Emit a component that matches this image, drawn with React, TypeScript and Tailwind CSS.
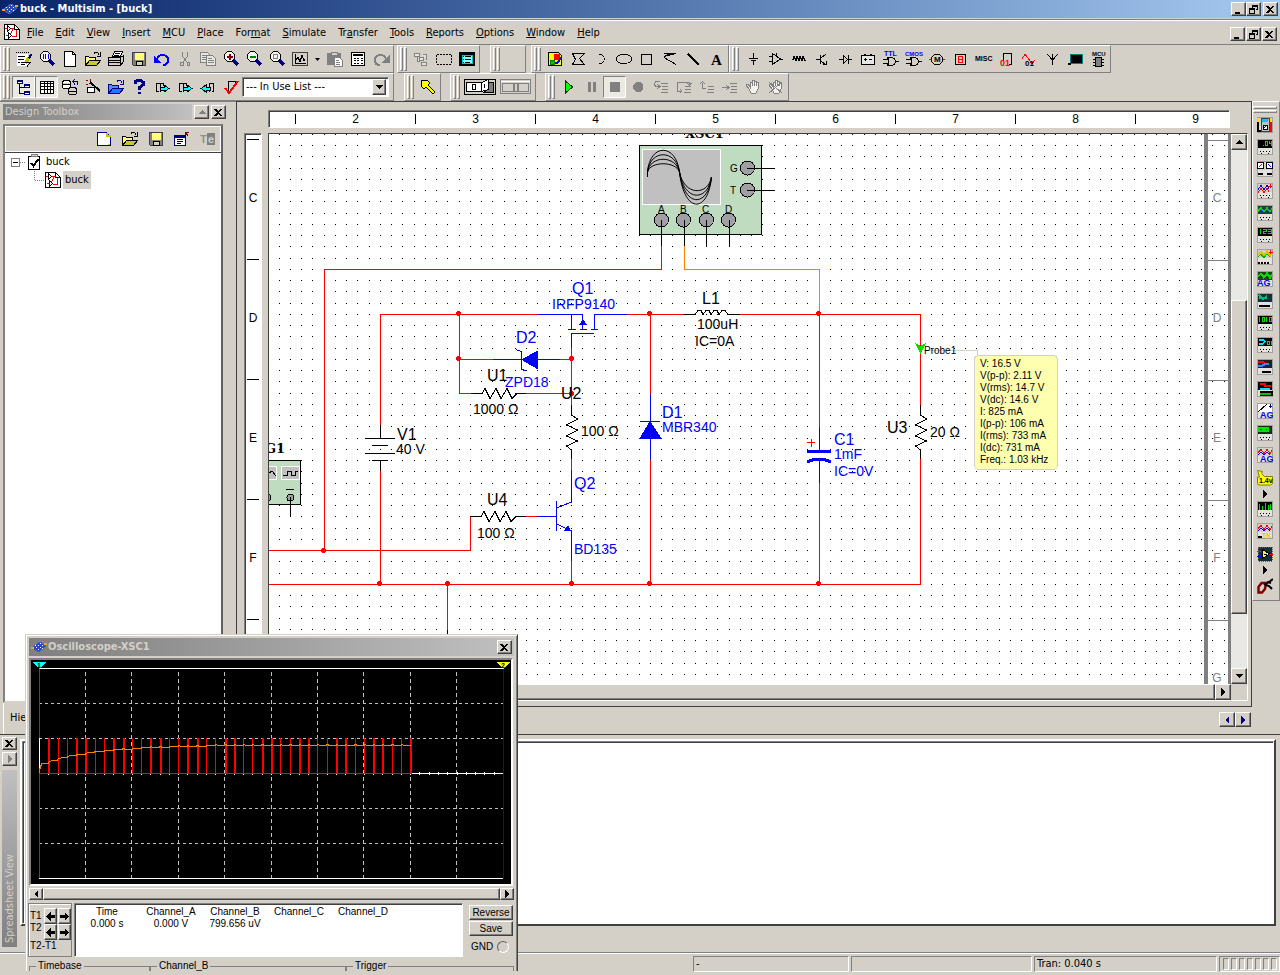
import { ReactNode, useState } from 'react';

const RAISED =
  'border border-t-white border-l-white border-r-[#404040] border-b-[#404040] shadow-[inset_-1px_-1px_0_#808080]';
const SUNKEN = 'border border-t-[#808080] border-l-[#808080] border-r-white border-b-white';
const WELL =
  'border border-t-[#808080] border-l-[#808080] border-r-white border-b-white shadow-[inset_1px_1px_0_#404040]';

// d, stroke, fill, stroke width
type Shape = [string, string?, string?, number?];
type Label = [text: string, x: number, y: number, color: string, size: number];
interface Glyph {
  s: Shape[];
  t?: Label[];
}

const G = '#808080';
const BLUE = '#0000ff';
const NAVY = '#000080';
const LENS: Shape = ['M4.5 .5h4l3 3v4l-3 3h-4l-3-3v-4z', '#000', '#f4f4f4'];
const HANDLE: Shape = ['M10.500 9.500l4.500 4.500', NAVY, 'none', 3];
const FOLDER: Shape[] = [
  ['M.5 14.500v-9h3l1 1h6v3', '#000', '#ffff80'],
  ['M.5 14.500l4-5h11l-4 5z', '#000', '#c8c832'],
  ['M9 2.500c1-2 4-2 5 1M15.500 1v4h-4', '#000'],
];
const FLOPPY: Shape[] = [
  ['M1.5 1.500h13v13h-12l-1-1z', '#404040', G],
  ['M4 2h8v6h-8z', '#ffff80', '#ffff80'],
  ['M5 10.500h6v4h-6z', '#000', '#d4d0c8'],
];
const SCHEMATIC: Shape[] = [
  ['M.500 .5h10l5 5v10h-15z', '#000', '#fff'],
  ['M10.500 .5v5h5', '#000'],
  ['M1 4.500h4M2 11.500h4l3-7h-3M12 6v6h-4', '#ff0000'],
  ['M3.500 2v5l3-2.500zM4.500 9v5l3-2.500z', '#000', '#fff'],
];
const LINES: Shape = ['M8 4.500h7M9 7.500h6M9 10.500h6M8 13.500h7', G];

const glyphs: Record<string, Glyph> = {
  app: {
    s: [
      ['M1 9l8-6 6 4-7 6z', '#3a62c8', '#2a4ab0'],
      ['M5 8h1M7 6h1M9 4.500h1M7 10h1M9 8h1M11 6h1M4 6h1M11 9h1', '#fff', 'none', 1],
      ['M0 9h3M13 5h3', '#f0a030', 'none', 2],
    ],
  },
  schematic: { s: SCHEMATIC },
  notes: {
    s: [
      ['M1.500 3.500h10v11h-10z', '#fff', '#fff'],
      ['M0 1.500h1M2 1.500h1M4 1.500h1M6 1.500h1M8 1.500h1M10 1.500h1M12 1.500h1M2 5.500h7M2 8.500h6M2 11.500h2', '#000'],
      ['M15.500 3l-3 5', NAVY, 'none', 2],
      ['M12.500 7l-3 5', '#c0c000', 'none', 3],
      ['M5 11.500h9l-3 4M5 13.500h4', '#000'],
    ],
  },
  find: { s: [LENS, ['M4 3v5M6.500 3v5M9 3v5', BLUE], HANDLE] },
  page: { s: [['M2.500 .500h8l3 3v12h-11z', '#000', '#fff'], ['M10.500 .500v3h3', '#000']] },
  pageNew: { s: [['M1.500 1.500h9l4 4v9h-13z', NAVY, '#fff'], ['M10.500 2v3h4M13 13v1', '#c8c800', 'none', 2]] },
  open: { s: FOLDER },
  print: {
    s: [
      ['M4.500 5.500l2-5h8l-2 5z', '#000', '#fff'],
      ['M.500 6.500h12l3-2v6l-3 4h-12z', '#000', '#d4d0c8'],
      ['M1 9.500h12M1 11.500h12M12.500 7v7M7 2.500h5M6 4.500h5', '#000'],
      ['M9 12.500h2', '#c8c800'],
    ],
  },
  save: { s: FLOPPY },
  undo: { s: [['M3 8c2-6 11-5 11 1c0 3-2 5-5 5', BLUE, 'none', 2], ['M0 5v6h6z', BLUE, BLUE]] },
  cut: { s: [['M5.500 1v4l4 6M10.500 1v4l-4 6M4 11h2v3h-3v-2zM10 11h2v3h-2z', G, 'none', 1]] },
  copy: {
    s: [
      ['M.500 1.500h7l2 2v8h-9z', G, '#e8e6e0'],
      ['M6.500 4.500h6l3 3v7h-9z', G, '#e8e6e0'],
      ['M8 7.500h4M8 9.500h6M8 11.500h6M2 4.500h4M2 6.500h4M2 8.500h4', G],
    ],
  },
  zoomIn: { s: [LENS, ['M3.500 5.500h6M6.500 2.500v6', '#800000', 'none', 2], HANDLE] },
  zoomOut: { s: [LENS, ['M3.500 5.500h6', '#008000', 'none', 2], HANDLE] },
  zoomFit: { s: [LENS, ['M4.500 3.500h4v4h-4z', G], HANDLE] },
  graph: { s: [['M.5 1.500h15v13h-15z', '#404040', '#d4d0c8'], ['M3.500 3v9h10', '#000'], ['M4 9l2-3 2 5 2-7 2 6 1-2', '#000']] },
  paste: { s: [['M.500 2.500h13v11h-13z', G, G], ['M4 1h6v3h-6z', G, '#d4d0c8'], ['M7.500 6.500h5l3 3v6h-8z', G, '#fff'], ['M9 9.500h3M9 11.500h4M9 13.500h4', G]] },
  calc: {
    s: [
      ['M1.500 1.500h13v13h-13z', '#000', '#fff'],
      ['M3 4h10', '#000', 'none', 2],
      ['M3.500 7.500h2M7 7.500h2M10.500 7.500h2M3.500 9.500h2M7 9.500h2M10.500 9.500h2M3.500 12h2M7 12h2M10.500 12h2', '#000', 'none', 1],
    ],
  },
  redo: { s: [['M13 8c-2-6-11-5-11 1c0 3 2 5 5 5', G, 'none', 2], ['M16 5v6h-6z', G, G]] },
  hier: { s: [['M1.500 2.500h5v3h-5zM6.500 6.500h4v3h-4zM8.500 11.500h5v3h-5zM9.500 3.500h4v5M4.500 6v4h2', G, '#e8e6e0']] },
  area: { s: [['M1 3.500h2M4 3.500h2M7 3.500h2M10 3.500h2M13 3.500h2M1 13.500h2M4 13.500h2M7 13.500h2M10 13.500h2M13 13.500h2M.500 4v2M.500 7v2M.500 10v2M15.500 4v2M15.500 7v2M15.500 10v2', '#000']] },
  panel: { s: [['M.500 1.500h15v13h-15z', '#000', '#000'], ['M3 4h10v8h-10z', '#00c8c8', '#80ffff'], ['M4 5.500h1M6 5.500h6M4 8.500h1M6 8.500h6M4 11.500h1M6 11.500h5', '#000']] },
  picture: {
    s: [
      ['M1.500 1.500h10l3 3v10h-13z', '#000', '#ffff00'],
      ['M7 3h5v5h-5z', '#ff0000', '#ff0000'],
      ['M3 9h4v4h-4z', '#008000', '#00c000'],
      ['M14.500 6l-4 6h-3', BLUE, 'none', 2],
    ],
  },
  polygon: { s: [['M2.500 2.500h12l-5 5 5 6h-12l3-5z', '#000']] },
  arc: { s: [['M6 3c7 0 7 10 0 10', '#000']] },
  ellipse: { s: [['M.500 8c0-6 15-6 15 0s-15 6-15 0z', '#000']] },
  rect: { s: [['M2.500 3.500h10v10h-10z', '#000']] },
  polyline: { s: [['M14 2.500h-5l-7 3v1l12 7M2 2.500h8M2 5.500l12-3', '#000']] },
  line: { s: [['M3 3l11 11', '#000', 'none', 2]] },
  letter: { s: [], t: [['A', 3, 14, '#000', 15]] },
  source: { s: [['M8.500 2v5M4 7.500h9M6 9.500h5M8.500 10v4', '#000']] },
  opamp: { s: [['M4.500 2.500v11l8-5.500zM1 5.500h3M1 10.500h3M12 8h3M8.500 2v3', '#000']] },
  coil: { s: [['M1 8.500h1l1-3 2 4 1-4 2 4 1-4 2 4 1-4 2 4h1', '#000']] },
  npn: { s: [['M2 8.500h4M6.500 4v9M7 7l5-4M7 10l5 4M9 13h3v-3', '#000']] },
  diode: { s: [['M2 8.500h4M11 8.500h4M6.500 4.500v8l4-4zM11.500 4v9', '#000']] },
  battery: { s: [['M1.500 4.500h13v9h-13z', '#000', '#e8e6e0'], ['M4 3h2M10 3h2M4 8.500h3M9 8.500h3M5.500 7v3', '#000']] },
  ttl: { s: [['M4.500 6.500h4c5 1 5 7 0 8h-4c2-3 2-5 0-8zM0 8.500h5M0 12.500h5M12 10.500h4', '#000']], t: [['TTL', 1, 5, BLUE, 7]] },
  cmos: { s: [['M4.500 6.500h4c5 1 5 7 0 8h-4c2-3 2-5 0-8zM0 8.500h5M0 12.500h5M12 10.500h4', '#000']], t: [['CMOS', -1, 5, BLUE, 6]] },
  motor: { s: [['M0 8.500h3M13 8.500h3', '#ff0000'], ['M5.500 3.500h5l3 3v4l-3 3h-5l-3-3v-4z', '#000']], t: [['M', 5, 11, '#000', 8]] },
  segment: { s: [['M3.500 3.500h10v10h-10z', '#000'], ['M6 5.500h5M6 8.500h5M6 11.500h5M6.500 6v5M10.500 6v5', '#ff0000']] },
  misc: { s: [], t: [['MISC', 0, 10, '#000', 7]] },
  digital: { s: [['M5.500 10v-8h8v11h-3', '#000']], t: [['01', 2, 15, '#ff0000', 9]] },
  mixed: { s: [['M1 8l3-5 3 4 4 6 3-4', '#ff0000']], t: [['01', 4, 15, '#000', 8]] },
  antenna: { s: [['M8.500 3v11M3 3l5.500 6 5.500-6', '#000']] },
  screen: { s: [['M3.500 3.500h12v9h-12z', '#008080', '#000'], ['M1 12.500h3M5 5.500h1', '#000', 'none', 2]] },
  mcu: { s: [['M5.500 6.500h6v9h-6z', '#000', G], ['M3 8.500h2M3 11.500h2M3 14h2M12 8.500h2M12 11.500h2M12 14h2', '#000']], t: [['MCU', 2, 5, '#000', 6]] },
  tree: { s: [['M1.500 1.500h5v3h-5zM8.500 5.500h5v3h-5zM8.500 12.500h5v3h-5z', NAVY, '#fff'], ['M1 2.500h6M8 6.500h6M8 13.500h6', NAVY], ['M3.500 5v9.500h5M3.500 8.500h5', '#000']] },
  table: { s: [['M1.500 2.500h13v12h-13z', '#000', '#fff'], ['M2 4.500h12M2 7.500h12M2 10.500h12M5.500 3v11M8.500 3v11M11.500 3v11', '#000']] },
  database: { s: [['M.500 3.500c0-3 8-3 8 0v4c0 3-8 3-8 0zM.500 3.500c0 3 8 3 8 0', '#000', '#fff'], ['M6.500 10.500c0-3 8-3 8 0v3c0 3-8 3-8 0zM6.500 10.500c0 3 8 3 8 0', '#000', '#d4d0c8'], ['M11 2.500h4.500v3M13 0l-2 2.500 2 3', NAVY]] },
  wizard: { s: [['M1 1h2M5 0v2M1 5h2M4 4h1', '#800000'], ['M5 3l10 9', '#000', 'none', 2], ['M2.500 8.500h7v5h-7z', '#000', '#fff']] },
  openBlue: { s: [['M.500 14.500v-9h3l1 1h6v3', NAVY, '#4a90ff'], ['M.500 14.500l4-5h11l-4 5z', NAVY, '#1e78ff'], ['M9 2.500c1-2 4-2 5 1M15.500 1v4h-4', NAVY]] },
  help: { s: [['M4 5v-2l2-1.500h4l2 1.500v3l-4 3v2M8 13v2', NAVY, 'none', 3]] },
  fwd: { s: [['M4.500 12.500h-2v-8h4v8M6.500 4.500h3v2', '#000'], ['M6 8.500h4v-2.500l5 3.500-5 3.500v-2h-4z', '#000', '#00ffff']] },
  back: { s: [['M11.500 12.500h2v-8h-4v8', '#000'], ['M10 8.500h-4v-2.500l-5 3.500 5 3.500v-2h4z', '#000', '#00ffff']] },
  erc: { s: [['M5.500 12v-9.500h7v4', '#000'], ['M2 9l4 5 9-12', '#ff0000', 'none', 2]] },
  probe: { s: [['M1 1h6l3 3-2 2 7 7-2 2-7-7-2 2-3-3z', '#000', '#ffff00']] },
  run: { s: [['M4.500 2v12l7-6z', '#004000', '#00ff00']] },
  pause: { s: [['M4 3h3v10h-3zM9 3h3v10h-3z', 'none', G]] },
  stop: { s: [['M3 3h10v10h-10z', 'none', G]] },
  record: { s: [['M6 3h4l3 3v4l-3 3h-4l-3-3v-4z', 'none', G]] },
  into: { s: [LINES, ['M7 2.500h-4c-2 2-2 4 0 5h3M4 5l3 2.500-3 2.500', G]] },
  over: { s: [['M9 7.500h6M9 10.500h6M8 13.500h7', G], ['M1.500 12v-9h12v3M11 4l2.500 2.500 2-2.500M1 12h5M4 10l2 2-2 2', G]] },
  out: { s: [['M9 7.500h6M9 10.500h6M8 13.500h7', G], ['M7 9.500h-4v-6M1 5l2.500-2.500 2.500 2.500', G]] },
  cursor: { s: [LINES, ['M0 8.500h6M4 6l3 2.500-3 2.500', G]] },
  hand: { s: [['M4 10l-3-4 2-1 2 3v-5h2v4-6h2v6-5h2v5-4h2v7l-2 4h-5z', G, '#f4f2ec']] },
  handStop: { s: [['M4 10l-3-4 2-1 2 3v-5h2v4-6h2v6-5h2v5-4h2v7l-2 4h-5z', G, '#f4f2ec'], ['M1 3l13 11M14 3l-13 11', G, 'none', 1]] },
  report: { s: [['M.500 4.500h11v10h-11z', NAVY, '#fff'], ['M1 5.500h10', NAVY, 'none', 2], ['M3 8.500h6M3 10.500h6M3 12.500h4', '#000'], ['M15 1h-4v3M14 5l-3-4', '#800000']] },
  text: { s: [['M7 2h8v12h-8z', 'none', G]], t: [['T', 0, 12, '#909090', 11], ['e', 8, 12, '#d4d0c8', 11]] },
  clip: { s: [['M2.500 2.500h11v13h-11z', '#000', '#fff'], ['M5 2.500h6v-2h-6z', G, '#d4d0c8'], ['M5 9l2.500 3 5-7', '#000', 'none', 2]] },
};

function Icon({ name }: { name: string }) {
  const g = glyphs[name];
  return (
    <svg width="16" height="16" viewBox="0 0 16 16" className="shrink-0 overflow-visible" shapeRendering="crispEdges" aria-hidden="true">
      {g.s.map(([d, stroke = '#000', fill = 'none', w = 1], i) => (
        <path key={i} d={d} stroke={stroke} fill={fill} strokeWidth={w} />
      ))}
      {g.t?.map(([text, x, y, color, size]) => (
        <text key={text} x={x} y={y} fill={color} fontSize={size} fontWeight="bold" fontFamily={name === 'letter' ? 'Liberation Serif' : 'Liberation Sans'}>
          {text}
        </text>
      ))}
    </svg>
  );
}

function Tool({ name, pressed }: { name: string; pressed?: boolean }) {
  return (
    <button
      aria-label={name}
      className={`flex h-[22px] w-[23px] shrink-0 items-center justify-center ${pressed ? `${SUNKEN} bg-[#ebe9e4]` : ''}`}
    >
      <Icon name={name} />
    </button>
  );
}

function Band({ children, className = '' }: { children?: ReactNode; className?: string }) {
  return (
    <div
      className={`flex h-7 shrink-0 items-center border border-t-white border-l-white border-r-[#808080] border-b-[#808080] ${className}`}
    >
      <div className="mx-0.5 flex gap-px">
        <div className="h-6 w-[3px] border border-t-white border-l-white border-r-[#808080] border-b-[#808080]" />
        <div className="h-6 w-[3px] border border-t-white border-l-white border-r-[#808080] border-b-[#808080]" />
      </div>
      {children}
    </div>
  );
}

function Arrow({ dir, color = '#000' }: { dir: 'up' | 'down' | 'left' | 'right'; color?: string }) {
  const d = { up: 'M0 6h8l-4-4z', down: 'M0 2h8l-4 4z', left: 'M6 0v8l-4-4z', right: 'M2 0v8l4-4z' }[dir];
  return (
    <svg width="8" height="8" viewBox="0 0 8 8" shapeRendering="crispEdges" aria-hidden="true">
      <path d={d} fill={color} />
    </svg>
  );
}

const captionPaths = {
  minimize: 'M2 8h5v2h-5z',
  restore: 'M4 1h6v5h-2v-1h1v-2h-4v1h-1zM1 4h6v6h-6zM2 6v3h4v-3z',
  close: 'M1 2h2l2 2 2-2h2l-3 3.500 3 3.500h-2l-2-2-2 2h-2l3-3.500z',
};

function CaptionButton({ kind }: { kind: keyof typeof captionPaths }) {
  return (
    <button aria-label={kind} className={`flex h-3.5 w-[15px] items-center justify-center bg-[#d4d0c8] ${RAISED}`}>
      <svg width="11" height="11" viewBox="0 0 11 11" shapeRendering="crispEdges" aria-hidden="true">
        <path d={captionPaths[kind]} fillRule="evenodd" />
      </svg>
    </button>
  );
}

const menus: [string, string, string][] = [
  ['', 'F', 'ile'],
  ['', 'E', 'dit'],
  ['', 'V', 'iew'],
  ['', 'I', 'nsert'],
  ['', 'M', 'CU'],
  ['', 'P', 'lace'],
  ['For', 'm', 'at'],
  ['', 'S', 'imulate'],
  ['Tr', 'a', 'nsfer'],
  ['', 'T', 'ools'],
  ['', 'R', 'eports'],
  ['', 'O', 'ptions'],
  ['', 'W', 'indow'],
  ['', 'H', 'elp'],
];

function DesignToolbox() {
  return (
    <aside className="flex w-[236px] shrink-0 flex-col border-t border-[#808080] pt-0.5">
      <div className="flex h-4 items-center gap-0.5 pl-[3px]">
        <h2 className="h-full w-[189px] bg-linear-to-r from-[#808080] to-[#c0c0c0] pl-0.5 leading-4 text-[#d4d0c8]">
          Design Toolbox
        </h2>
        <button aria-label="Roll up" className={`flex h-3.5 w-[15px] items-center justify-center ${RAISED}`}>
          <Arrow dir="up" color="#808080" />
        </button>
        <CaptionButton kind="close" />
      </div>
      <div className="mt-1 ml-[3px] flex w-[220px] grow flex-col border-2 border-t-[#808080] border-l-[#808080] border-r-[#606060] border-b-[#d4d0c8]">
        <div className="flex h-[26px] shrink-0 items-center justify-end gap-0.5 border border-white">
          {['pageNew', 'open', 'save', 'report', 'text'].map((n) => (
            <span key={n} className="flex w-6 justify-center">
              <Tool name={n} />
            </span>
          ))}
        </div>
        <ul className="grow border-t border-[#404040] bg-white pl-1">
          <li>
            <div className="flex h-[18px] items-center">
              <svg width="17" height="18" shapeRendering="crispEdges" aria-hidden="true">
                <path d="M2.500 5.500h8v8h-8z" stroke="#808080" fill="none" />
                <path d="M11 9.500h6" stroke="#808080" strokeDasharray="1 1" />
                <path d="M4 9.500h5" stroke="#000" />
              </svg>
              <Icon name="clip" />
              <span className="px-1">buck</span>
            </div>
            <ul>
              <li className="flex h-[18px] items-center pl-5">
                <svg width="16" height="18" shapeRendering="crispEdges" aria-hidden="true">
                  <path d="M5.500 0v9.500h10" stroke="#808080" fill="none" strokeDasharray="1 1" />
                </svg>
                <Icon name="schematic" />
                <span className="ml-0.5 bg-[#d4d0c8] px-0.5 leading-[18px]">buck</span>
              </li>
            </ul>
          </li>
        </ul>
      </div>
      <div className="ml-[3px] h-[31px] border-l border-white pt-2 pl-1.5">Hierarchy</div>
    </aside>
  );
}

const SHEET_TOP = 134;
const dots = (() => {
  let d = '';
  for (let j = -1; j < 60; j++) {
    const y = Math.floor(145.5 + 11.25 * j);
    for (let i = 0; i < 85; i++) d += `M${Math.floor(279 + 11.25 * i)} ${y}h1v1h-1z`;
  }
  return d;
})();

const redWires =
  'M661.500 246V269.500H324.500V550M269 550.500H470.500V516M380.500 425V314.500H538M380.500 471V584M269 584.500H920.500V459M920.500 405V314.500H740M627 314.500H684' +
  'M459.500 314V393.500H471M459 359.500H493M560 359.500H571M526 393.500H571M571.500 348V405M571.500 459V470M571.500 561V584M526 516.500H537' +
  'M650.500 314V394M650.500 460V584M819.500 314V427M819.500 483V584M447.500 584V630';
const blackParts =
  'M470 516.500H481l3 -5 5 10 6 -10 5 10 6 -10 5 10 5 -5H526M471 393.500H482l3 -5 5 10 6 -10 5 10 6 -10 5 10 5 -5H526' +
  'M571.500 405V415l6 4 -11 6 11 5 -11 6 11 5 -11 5 5 4V459M920.500 405V415l6 4 -11 6 11 5 -11 6 11 5 -11 5 5 4V459' +
  'M380.500 425V438M365 438.500H395M372 445.500H388M365 453.500H395M372 460.500H388M380.500 460V471M447.500 630V700' +
  'M684 314.500H695l3-4h3l2 4l3-4h3l2 4l3-4h3l2 4l3-4h3l3 4H740';
const blueParts =
  'M538 314.500H582.500V329M571.500 314V329M594.500 329V314.500H627M568 329.500H576M580 329.500H587M591 329.500H598M594 333.500H571.500V348' +
  'M493 359.500H560M516 349.500l5 2V369l5 2M650.500 394V460M640 421.500H660M819.500 427V451M819.500 460V483' +
  'M537 516.500H556M556.500 501V531M571.500 470V502L556.500 508M556.500 524L571.500 531V561';
const junctions = [
  [323, 550], [379, 583], [447, 583], [571, 583], [649, 583], [818, 583],
  [458, 313], [649, 313], [818, 313], [458, 358], [571, 358], [571, 393],
];

// text, x, baseline, size
const blackLabels: [string, number, number, number][] = [
  ['L1', 702, 304, 16], ['100uH', 697, 329, 14], ['IC=0A', 695, 346, 14], ['U1', 487, 381, 16], ['1000 Ω', 473, 414, 14],
  ['U2', 561, 399, 16], ['100 Ω', 581, 436, 14], ['V1', 397, 440, 16], ['40 V', 396, 454, 14], ['U4', 487, 505, 16],
  ['100 Ω', 477, 538, 14], ['U3', 887, 433, 16], ['20 Ω', 930, 437, 14],
];
const blueLabels: [string, number, number, number][] = [
  ['Q1', 572, 294, 16], ['IRFP9140', 552, 309, 14], ['D2', 516, 343, 16], ['ZPD18', 505, 387, 14], ['Q2', 574, 489, 16],
  ['BD135', 574, 554, 14], ['D1', 662, 418, 16], ['MBR340', 662, 432, 14], ['C1', 834, 445, 16], ['1mF', 834, 459, 14],
  ['IC=0V', 834, 476, 14],
];
const readings = [
  'V: 16.5 V', 'V(p-p): 2.11 V', 'V(rms): 14.7 V', 'V(dc): 14.6 V', 'I: 825 mA', 'I(p-p): 106 mA', 'I(rms): 733 mA',
  'I(dc): 731 mA', 'Freq.: 1.03 kHz',
];

function Schematic() {
  return (
    <svg className="block h-full w-full" fontFamily="Liberation Sans" fill="none" role="img" aria-label="Buck converter schematic">
      <g transform={`translate(-269 -${SHEET_TOP})`} shapeRendering="crispEdges">
        <path d="M1204 134h4v800h-4zM1228 134h3v800h-3z" fill="#808080" />
        <path d="M1208 140.500h20M1208 260.500h20M1208 380.500h20M1208 500.500h20M1208 620.500h20" stroke="#808080" />
        {['C', 'D', 'E', 'F', 'G'].map((c, i) => (
          <text key={c} x="1217" y={202 + i * 120} textAnchor="middle" fontSize="12" fill="#808080">
            {c}
          </text>
        ))}
        <path d={dots} fill="#000" />
        <path d={redWires} stroke="#f00" />
        <path d="M684.500 246V269.500H819.500V314" stroke="#ff8000" />
        <path d={blackParts} stroke="#000" />
        <path d={blueParts} stroke="#00f" />
        <path d="M579 325h8l-4-6zM521 359.500l17-9v19zM650 421l12 18h-23zM571 531l-7 0 4-6z" fill="#00f" />
        <path d="M807 451.500h24M807 462q12-6 24 0" stroke="#00f" strokeWidth="3" />
        <path d="M807 442.500h8M811.500 439v8" stroke="#f00" />
        <path d="M924 350.500H977.500V356" stroke="#d4d0c8" />
        {junctions.map(([x, y]) => (
          <circle key={`${x}-${y}`} cx={x + 0.5} cy={y + 0.5} r="2.500" fill="#f00" />
        ))}
        {blackLabels.map(([t, x, y, size]) => (
          <text key={`${t}-${x}`} x={x} y={y} fontSize={size} fill="#000">
            {t}
          </text>
        ))}
        {blueLabels.map(([t, x, y, size]) => (
          <text key={`${t}-${x}`} x={x} y={y} fontSize={size} fill="#00f">
            {t}
          </text>
        ))}
        <path d="M915 343l5.500 3 5.500-3-5.500 11z" fill="#00e000" />
        <text x="924" y="354" fontSize="10" fill="#000">Probe1</text>
        <rect x="974.500" y="355.500" width="83" height="114" rx="4" fill="#ffffb0" stroke="#d4d0c8" />
        {readings.map((r, i) => (
          <text key={r} x="980" y={367 + i * 12} fontSize="10" fill="#000">
            {r}
          </text>
        ))}

        {/* oscilloscope XSC1 */}
        <text x="685" y="138" fontSize="13" fontWeight="bold" fontFamily="DejaVu Serif" fill="#000">XSC1</text>
        <rect x="639.500" y="145.500" width="122" height="89" fill="#c0dcc0" stroke="#000" />
        <rect x="642.500" y="149.500" width="78" height="55" fill="#c0c0c0" stroke="#fff" />
        {[0, 1, 2, 3].map((k) => (
          <path
            key={k}
            d={`M647.500 177V172C650 ${143 + k * 6} 676 ${143 + k * 6} 679.500 172C684 ${214 - k * 6} 708 ${214 - k * 6} 711.500 177`}
            stroke="#000"
            shapeRendering="auto"
          />
        ))}
        {[[747, 168], [747, 190], [661, 220], [683, 220], [706, 220], [728, 220]].map(([x, y]) => (
          <circle key={`${x}-${y}`} cx={x + 0.5} cy={y} r="7" fill="#a0a0a4" stroke="#000" />
        ))}
        <path d="M747 168.500h28M747 190.500h28M661.500 220v26M684.500 220v26M706.500 220v26M729.500 220v26" stroke="#000" />
        {([['G', 730, 172], ['T', 730, 194], ['A', 658, 213], ['B', 680, 213], ['C', 702, 213], ['D', 725, 213]] as const).map(([t, x, y]) => (
          <text key={t} x={x} y={y} fontSize="10" fill="#000">
            {t}
          </text>
        ))}

        {/* function generator, cut off by the sheet edge */}
        <text x="265" y="453" fontSize="13" fontWeight="bold" fontFamily="DejaVu Serif" fill="#000">G1</text>
        <path d="M260 460.500H300.500V504.500H260z" fill="#c0dcc0" stroke="#000" />
        <path d="M260 466.500H276.500V479.500H260zM281.500 466.500h18v13h-18z" fill="#c0c0c0" stroke="#fff" />
        <path d="M269 473l3-2 4 5M283 475.500h4v-4h4v4h4v-4h3M286 489.500h8" stroke="#000" />
        <circle cx="267.500" cy="497.500" r="3.500" fill="#a0a0a4" stroke="#000" />
        <circle cx="290.500" cy="497.500" r="3.500" fill="#a0a0a4" stroke="#000" />
        <path d="M290.500 497v20" stroke="#000" />
      </g>
    </svg>
  );
}

function Workspace() {
  return (
    <main className="flex min-w-0 grow flex-col">
      <div className="flex min-h-0 grow flex-col border border-[#404040] pt-2 pr-[3px] pb-[5px] pl-[7px]">
        <div className={`mr-[18px] ml-6 flex h-[18px] shrink-0 overflow-hidden bg-white ${WELL}`}>
          <div className="w-[26px] shrink-0" />
          {[2, 3, 4, 5, 6, 7, 8, 9].map((n) => (
            <div key={n} className="my-[3px] w-[120px] shrink-0 border-l border-black text-center text-[12px] leading-[11px] [font-family:'Liberation_Sans']">
              {n}
            </div>
          ))}
        </div>
        <div className="mt-[5px] flex min-h-0 grow">
          <div className={`mr-1.5 flex w-[18px] shrink-0 flex-col overflow-hidden bg-white ${WELL}`}>
            <div className="h-[5px] shrink-0" />
            {['C', 'D', 'E', 'F', 'G'].map((c) => (
              <div key={c} className="mx-0.5 h-[120px] shrink-0 border-t border-black text-center text-[12px] leading-[116px] [font-family:'Liberation_Sans']">
                {c}
              </div>
            ))}
          </div>
          <div className="flex min-w-0 grow flex-col border border-t-[#404040] border-l-[#404040] border-r-white border-b-white">
            <div className="flex min-h-0 grow">
              <div className="min-w-0 grow overflow-hidden bg-white">
                <Schematic />
              </div>
              <div className="flex w-4 shrink-0 flex-col bg-[#eae8e4]">
                <button aria-label="Scroll up" className={`flex h-4 items-center justify-center bg-[#d4d0c8] ${RAISED}`}>
                  <Arrow dir="up" />
                </button>
                <div className="h-[150px]" />
                <div className={`h-[314px] bg-[#d4d0c8] ${RAISED}`} />
                <div className="grow" />
                <button aria-label="Scroll down" className={`flex h-4 items-center justify-center bg-[#d4d0c8] ${RAISED}`}>
                  <Arrow dir="down" />
                </button>
              </div>
            </div>
            <div className="mr-4 flex h-4 shrink-0">
              <div className={`grow ${RAISED}`} />
              <button aria-label="Scroll right" className={`flex w-4 items-center justify-center ${RAISED}`}>
                <Arrow dir="right" />
              </button>
            </div>
          </div>
        </div>
      </div>
      <div className="flex h-[27px] shrink-0 items-center justify-end pr-px pb-0.5">
        <button aria-label="Previous sheet" className={`flex h-[15px] w-4 items-center justify-center ${RAISED}`}>
          <Arrow dir="left" color="#000080" />
        </button>
        <button aria-label="Next sheet" className={`flex h-[15px] w-4 items-center justify-center ${RAISED}`}>
          <Arrow dir="right" color="#000080" />
        </button>
      </div>
    </main>
  );
}

interface Instrument {
  name: string;
  bg: string;
  traces: Shape[];
  label?: Label;
}
const DOTS_ROW: Shape = ['M3 12.500h1M6 12.500h1M9 12.500h1M12 12.500h1M4 14.500h1M11 14.500h1', '#000'];
const WAVE = 'M1 5.500l3-3 3 4 3-4 3 4 2-3';
const instruments: Instrument[] = [
  { name: 'Multimeter', bg: '#d4d0c8', traces: [['M1 1v4M14 1v4', '#ffe000', 'none', 2], ['M14 5v9h-2', '#ff0000', 'none', 2], ['M1 5v9h3', '#000', 'none', 2], ['M4 1.500h8v13h-8z', '#404040', '#c0c0c0'], ['M5 3.500h6', '#00c8e8', 'none', 3], ['M6 8h4v4h-4zM7 11l3-3', '#000', '#fff']] },
  { name: 'Function generator', bg: '#000', traces: [['M6 6.500h1M8.500 2.500h2v4h-2zM12.500 2v2.500h2M14.500 2v5', '#00e000'], DOTS_ROW] },
  { name: 'Wattmeter', bg: '#d4d0c8', traces: [['M.500 1.500h6v6h-6zM9.500 1.500h6v6h-6z', '#000', '#fff'], ['M2 6l3-3', '#f00'], ['M11 3l3 3', BLUE], ['M1 12.500h5M10 12.500h5', '#000', 'none', 2]] },
  { name: 'Oscilloscope', bg: '#d4d0c8', traces: [['M1 6.500l3-4 3 4 3-4 2 3', BLUE], ['M1 9.500l3-4 3 4 3-4 2 3M13.500 1v4M11 3.500h4', '#f00'], DOTS_ROW] },
  { name: 'Four channel oscilloscope', bg: '#204040', traces: [['M1 6.500l3-3 3 3 3-3 3 3', '#4080ff'], [WAVE, '#00e000'], DOTS_ROW] },
  { name: 'Frequency counter', bg: '#000', traces: [['M3 2v5M6 2.500h3v2h-3v2h3M11 2.500h3v4h-3M11 4.500h3', '#00e000'], DOTS_ROW] },
  { name: 'Bode plotter', bg: '#d4d0c8', traces: [[WAVE, '#e0c000', 'none', 2], ['M1 8l3-3 3 4 3-4 3 3', '#00b000'], ['M13.500 1v4M12 3.500h4', '#f00'], ['M1 13.500h2M4 13.500h2M7 13.500h2M10 13.500h2', '#000', 'none', 2]] },
  { name: 'Agilent generator', bg: '#204020', traces: [[WAVE, '#00e000', 'none', 2]], label: ['AG', 0, 15, BLUE, 9] },
  { name: 'IV analyzer', bg: '#103040', traces: [['M2 2l4 4 4-3M2 5h8', '#00c060', 'none', 2], ['M2 12.500h11', '#000', 'none', 2]] },
  { name: 'Word generator', bg: '#000', traces: [['M2.500 2v5M5 2.500h2v4h-2zM9.500 2v5M12 2.500h2v4h-2z', '#00e000'], DOTS_ROW] },
  { name: 'Logic converter', bg: '#000', traces: [['M2 2.500h4l2 2-2 2h-4', '#00e0ff', 'none', 2], ['M10 4.500h2v3h-2zM14 4v4', '#00e000'], DOTS_ROW] },
  { name: 'Logic analyzer', bg: '#202020', traces: [['M1 2.500h4l3 2h4', '#f00', 'none', 2], ['M1 7h4l3-2h4', '#4080ff', 'none', 2], ['M5 13h9', '#000', 'none', 2]] },
  { name: 'Distortion analyzer', bg: '#000', traces: [['M3 10.500h12v4h-12z', '#000', '#000'], ['M3 3h5v2h6', '#f00', 'none', 2], ['M3 8h10', '#00e0ff', 'none', 2], ['M3 12.500h11', '#00c000', 'none', 2]] },
  { name: 'Spectrum analyzer', bg: '#fff', traces: [['M1 9l9-8', '#000'], ['M13.500 1v4M12 3.500h3', '#000080']], label: ['AG', 3, 15, BLUE, 9] },
  { name: 'Network analyzer', bg: '#103010', traces: [['M2 3h4v3h-4zM8 3h3v3h-3z', '#00e000', 'none', 2], DOTS_ROW] },
  { name: 'Agilent oscilloscope', bg: '#d4d0c8', traces: [[WAVE, '#f00'], ['M1 8l3-3 3 3 3-3 3 3', BLUE]], label: ['AG', 3, 15, BLUE, 9] },
];
const extraInstruments: Instrument[] = [
  { name: 'LabVIEW analyzer', bg: '#000', traces: [['M2.500 3v6M5.500 5v4M8.500 2v7M11.500 4v5M13.500 3v6', '#00e000'], DOTS_ROW] },
  { name: 'Tektronix oscilloscope', bg: '#d4d0c8', traces: [[WAVE, '#f00'], ['M1 8l3-3 3 3 3-3 3 3', BLUE], ['M1 13.500h4', '#000', 'none', 2]], label: ['TK', 5, 15, '#e0d000', 7] },
];

function InstrumentButton({ item }: { item: Instrument }) {
  return (
    <button aria-label={item.name} className="flex h-[22px] w-full items-center justify-center">
      <svg width="16" height="16" viewBox="0 0 16 16" shapeRendering="crispEdges" aria-hidden="true">
        <path d="M.500 .500h15v15h-15z" fill="#e4e2dc" stroke="#a0a0a0" />
        <path d="M1 1h14v8h-14z" fill={item.bg} />
        {item.traces.map(([d, stroke = '#000', fill = 'none', w = 1], i) => (
          <path key={i} d={d} stroke={stroke} fill={fill} strokeWidth={w} />
        ))}
        {item.label && (
          <text x={item.label[1]} y={item.label[2]} fill={item.label[3]} fontSize={item.label[4]} fontWeight="bold" fontFamily="Liberation Sans">
            {item.label[0]}
          </text>
        )}
      </svg>
    </button>
  );
}

function InstrumentBar() {
  return (
    <div className="w-7 shrink-0">
      <div className="border border-t-white border-l-white border-r-[#808080] border-b-[#808080] pt-1 pr-0.5 pb-0.5">
        <div className="flex flex-col gap-px pb-px">
          <div className="h-[3px] border border-t-white border-l-white border-r-[#808080] border-b-[#808080]" />
          <div className="h-[3px] border border-t-white border-l-white border-r-[#808080] border-b-[#808080]" />
        </div>
        {instruments.map((item) => (
          <InstrumentButton key={item.name} item={item} />
        ))}
        <button aria-label="Measurement probe" className="flex h-6 w-full items-center justify-center">
          <svg width="16" height="16" viewBox="0 0 16 16" className="overflow-visible" aria-hidden="true">
            <path d="M.5.5l5 1-1 2 3 3h8v7l-2 1.500h-12l-1-2v-6h2z" fill="#ffff00" stroke="#808000" />
            <text x="2" y="13" fontSize="7" fontWeight="bold" fontFamily="Liberation Sans">1.4v</text>
          </svg>
        </button>
        <div className="flex h-2 justify-center"><Arrow dir="right" /></div>
        {extraInstruments.map((item) => (
          <InstrumentButton key={item.name} item={item} />
        ))}
        <button aria-label="LabVIEW instruments" className="flex h-6 w-full items-center justify-center">
          <svg width="16" height="16" viewBox="0 0 16 16" shapeRendering="crispEdges" aria-hidden="true">
            <path d="M1 1h14v14h-14z" fill="#103038" stroke="#606060" strokeDasharray="1 1" />
            <path d="M5.500 3.500v9l7-4.500z" fill="#ffff00" stroke="#000" />
            <path d="M0 5.500h4M12 8.500h4" stroke="#f00" />
            <path d="M0 10.500h4" stroke="#00f" />
            <path d="M7 8h3" stroke="#000" />
          </svg>
        </button>
        <div className="flex h-2 justify-center"><Arrow dir="right" /></div>
        <button aria-label="Current probe" className="flex h-6 w-full items-center justify-center">
          <svg width="16" height="16" viewBox="0 0 16 16" aria-hidden="true">
            <path d="M1.500 9l3-4h4.500l-1 6-3 3.500h-3.500z" fill="none" stroke="#800000" strokeWidth="2.500" />
            <path d="M7 7l5-3 4-3M9 7l3 1 3 3M10 4l4 1" fill="none" stroke="#000" strokeWidth="2" />
          </svg>
        </button>
      </div>
    </div>
  );
}

const PLOT_STEP = 46.4;
const bursts = Array.from({ length: 40 }, (_, i) => Math.round((i + 1) * (PLOT_STEP / 5)));
// Channel B follows a first order rise with a little ripple on every switching edge
const channelB = (() => {
  let d = 'M9.500 113v-3l2-6 2-1';
  for (let i = 0; i < 40; i++) {
    const y = 84.5 + 18 * Math.exp(-i / 6);
    d += `L${9 + Math.round(i * 9.28) + 4} ${Math.round(y)}.5h5v-1`;
  }
  return d;
})();

function ScopeDisplay() {
  return (
    <div className="mx-1 mt-0.5 h-[228px] shrink-0 overflow-hidden border-2 border-t-[#808080] border-l-[#808080] border-r-white border-b-white bg-black">
      <svg width="484" height="226" className="block" fill="none" shapeRendering="crispEdges" role="img" aria-label="Oscilloscope trace">
        {/* origin at the window frame, plot starts at 8,8 */}
        <g transform="translate(-1 0)">
          {[1, 2, 3, 4, 5, 6, 7, 8, 9].map((i) => (
            <path key={i} d={`M${Math.floor(9 + i * PLOT_STEP) + 0.5} 12V218`} stroke="#c0c0c0" strokeDasharray="4 3" />
          ))}
          {[1, 2, 4, 5].map((i) => (
            <path key={i} d={`M9 ${8.5 + i * 35}H473`} stroke="#c0c0c0" strokeDasharray="3 3" />
          ))}
          <path d="M9 8.500H473M9 218.500H473M381 113.500H473M9.500 78V113" stroke="#fff" />
          {Array.from({ length: 50 }, (_, i) => (
            <path key={i} d={`M${Math.round(9 + (i + 1) * 9.28) + 0.5} 112v3`} stroke="#fff" />
          ))}
          {bursts.map((x, i) => (
            <path key={x} d={`M${9 + x} 78h${i % 4 === 1 || i % 4 === 2 ? 1 : 2}V114h-${i % 4 === 1 || i % 4 === 2 ? 1 : 2}z`} fill="#f00" />
          ))}
          <path d="M9 113.500H381M9.500 8V78M9.500 113V218" stroke="#f00" />
          <path d={channelB} stroke="#ff8000" />
          <path d="M473.500 8V218" stroke="#00f" />
          <path d="M3 2h13l-6.500 7z" fill="#0ff" />
          <path d="M467 2h13l-6.500 7z" fill="#ff0" />
        </g>
        <text x="6" y="8" fontSize="7" fontWeight="bold" fill="#000">1</text>
        <text x="470" y="8" fontSize="7" fontWeight="bold" fill="#000">2</text>
      </svg>
    </div>
  );
}

const cursorPaths = {
  left: 'M1 5.500l5-4.500v3h5v3h-5v3z',
  right: 'M11 5.500l-5-4.500v3h-5v3h5v3z',
};

function CursorButton({ dir, label }: { dir: 'left' | 'right'; label: string }) {
  return (
    <button aria-label={label} className={`flex h-4 w-[13px] items-center justify-center ${RAISED}`}>
      <svg width="11" height="11" viewBox="0 0 12 11" shapeRendering="crispEdges" aria-hidden="true">
        <path d={cursorPaths[dir]} />
      </svg>
    </button>
  );
}

function ScopeWindow() {
  const [grounded, setGrounded] = useState(false);
  return (
    <section className="absolute top-[634px] bottom-1 left-[25px] flex w-[493px] flex-col overflow-hidden border border-b-0 border-t-[#d4d0c8] border-l-[#d4d0c8] border-r-[#404040] bg-[#d4d0c8] shadow-[inset_1px_1px_0_#fff,inset_-1px_0_0_#808080] [font-family:'Liberation_Sans'] text-[10px]">
      <header className="mx-[3px] mt-[3px] flex h-[18px] shrink-0 items-center bg-linear-to-r from-[#808080] to-[#c0c0c0] px-0.5 text-[#d4d0c8]">
        <Icon name="app" />
        <h2 className="grow pl-px text-[11px] font-bold [font-family:'DejaVu_Sans_Condensed','DejaVu_Sans',sans-serif]">Oscilloscope-XSC1</h2>
        <CaptionButton kind="close" />
      </header>
      <div className="-ml-px"><ScopeDisplay /></div>
      <div className="mx-[3px] mt-0.5 flex h-3 shrink-0">
        <button aria-label="Scroll back" className={`flex w-3.5 items-center justify-center ${RAISED}`}>
          <Arrow dir="left" />
        </button>
        <div className={`grow ${RAISED}`} />
        <button aria-label="Scroll forward" className={`flex w-3.5 items-center justify-center ${RAISED}`}>
          <Arrow dir="right" />
        </button>
      </div>
      <div className="mx-0.5 mt-[3px] flex h-[54px] shrink-0 gap-0.5">
        <div className="w-11 border border-[#808080] pl-px shadow-[inset_1px_1px_0_#fff] leading-3">
          <div className="mt-1 flex items-center gap-px">
            <span className="w-3.5">T1</span>
            <CursorButton dir="left" label="T1 left" />
            <CursorButton dir="right" label="T1 right" />
          </div>
          <div className="flex items-start gap-px">
            <span className="-mt-0.5 w-3.5">T2</span>
            <CursorButton dir="left" label="T2 left" />
            <CursorButton dir="right" label="T2 right" />
          </div>
          <div>T2-T1</div>
        </div>
        <div className={`grow bg-white pt-0.5 ${WELL}`}>
          <table className="table-fixed text-center leading-3">
            <thead>
              <tr>
                {['Time', 'Channel_A', 'Channel_B', 'Channel_C', 'Channel_D'].map((h) => (
                  <th key={h} className="w-16 font-normal">{h}</th>
                ))}
              </tr>
            </thead>
            <tbody>
              <tr>
                <td>0.000 s</td>
                <td>0.000 V</td>
                <td>799.656 uV</td>
                <td />
                <td />
              </tr>
            </tbody>
          </table>
        </div>
        <div className="ml-1 flex w-[46px] flex-col gap-px pt-0.5">
          <button className={`h-[15px] w-11 leading-3 ${RAISED}`}>Reverse</button>
          <button className={`h-[15px] w-11 leading-3 ${RAISED}`}>Save</button>
          <label className="mt-1 flex items-center gap-1 pl-0.5 leading-3">
            GND
            <input
              type="radio"
              checked={grounded}
              onChange={() => setGrounded(true)}
              className="h-3 w-3 appearance-none rounded-full border border-t-[#606060] border-l-[#606060] border-r-white border-b-white"
            />
          </label>
        </div>
      </div>
      <div className="mx-[3px] mt-[3px] flex shrink-0">
        {[
          { title: 'Timebase', width: 'w-[121px]' },
          { title: 'Channel_B', width: 'w-[196px]' },
          { title: 'Trigger', width: 'grow' },
        ].map(({ title, width }) => (
          <fieldset key={title} className={`h-4 border border-[#808080] pl-1.5 ${width}`}>
            <legend className="px-0.5 leading-3">{title}</legend>
          </fieldset>
        ))}
      </div>
    </section>
  );
}

function SpreadsheetView() {
  return (
    <section className="flex h-[218px] shrink-0 border-t border-[#404040] pb-[26px]">
      <div className="flex w-[18px] flex-col gap-0.5 pt-0.5 pl-0.5">
        <CaptionButton kind="close" />
        <button aria-label="Collapse" className={`flex h-3.5 w-[15px] shrink-0 items-center justify-center ${RAISED}`}>
          <Arrow dir="right" color="#808080" />
        </button>
        <h2 className="mt-0.5 flex h-[177px] w-[15px] shrink-0 rotate-180 items-center bg-linear-to-b from-[#808080] to-[#c0c0c0] pt-1 leading-[15px] text-[#d4d0c8] [writing-mode:vertical-rl]">
          Spreadsheet View
        </h2>
      </div>
      <div className="mt-1 mr-1 ml-0.5 grow border-2 border-t-white border-l-white border-r-[#404040] border-b-[#404040]">
        <div className={`h-full bg-white ${WELL}`} />
      </div>
    </section>
  );
}

export default function App() {
  const [list, setList] = useState('use');

  return (
    <div className="relative flex h-screen min-h-[720px] flex-col overflow-hidden bg-[#d4d0c8] text-[11px] leading-[14px] text-black [font-family:'DejaVu_Sans_Condensed','DejaVu_Sans',sans-serif]">
      <header className="flex h-[18px] shrink-0 items-center bg-linear-to-r from-[#0a246a] to-[#a6caf0] px-0.5 text-white">
        <Icon name="app" />
        <h1 className="grow pl-0.5 text-[11px] font-bold">buck - Multisim - [buck]</h1>
        <CaptionButton kind="minimize" />
        <CaptionButton kind="restore" />
        <span className="w-0.5" />
        <CaptionButton kind="close" />
      </header>

      <nav className="mt-px flex h-[26px] shrink-0 items-center border-t border-b border-[#808080] pr-[3px] pl-1 shadow-[inset_0_1px_0_#fff]">
        <Icon name="schematic" />
        <div className="flex grow pt-0.5 pl-px">
          {menus.map(([before, key, after]) => (
            <button key={key + after} className="px-1.5">
              {before}
              <u>{key}</u>
              {after}
            </button>
          ))}
        </div>
        <div className="flex gap-px pt-1">
          <CaptionButton kind="minimize" />
          <CaptionButton kind="restore" />
          <CaptionButton kind="close" />
        </div>
      </nav>

      <div className="flex h-7 shrink-0 overflow-hidden">
        <Band className="w-[394px]">
          {['notes', 'find', 'page', 'open', 'print', 'save', 'undo', 'cut', 'copy', 'zoomIn', 'zoomOut', 'zoomFit', 'graph'].map((n) => (
            <Tool key={n} name={n} />
          ))}
          <button aria-label="Graph views" className="flex w-3 justify-center">
            <svg width="5" height="3" aria-hidden="true"><path d="M0 0h5l-2.500 3z" /></svg>
          </button>
          {['paste', 'calc', 'redo'].map((n) => (
            <Tool key={n} name={n} />
          ))}
        </Band>
        <Band className="ml-[3px] w-[83px]">
          {['hier', 'area', 'panel'].map((n) => (
            <Tool key={n} name={n} />
          ))}
        </Band>
        <Band className="ml-2.5 w-9" />
        <Band className="ml-[5px] w-[198px]">
          {['picture', 'polygon', 'arc', 'ellipse', 'rect', 'polyline', 'line', 'letter'].map((n) => (
            <Tool key={n} name={n} />
          ))}
        </Band>
        <Band className="w-[382px]">
          {['source', 'opamp', 'coil', 'npn', 'diode', 'battery', 'ttl', 'cmos', 'motor', 'segment', 'misc', 'digital', 'mixed', 'antenna', 'screen', 'mcu'].map((n) => (
            <Tool key={n} name={n} />
          ))}
        </Band>
      </div>
      <div className="flex h-7 shrink-0 overflow-hidden">
        <Band className="w-[394px]">
          <Tool name="tree" pressed />
          <Tool name="table" pressed />
          {['database', 'wizard', 'openBlue', 'help'].map((n) => (
            <Tool key={n} name={n} />
          ))}
          <Tool name="fwd" />
          <Tool name="fwd" />
          <Tool name="back" />
          <Tool name="erc" />
          <div className={`relative h-5 w-[147px] bg-white ${WELL}`}>
            <select
              aria-label="In use list"
              value={list}
              onChange={(e) => setList(e.target.value)}
              className="h-full w-full appearance-none pl-[3px]"
            >
              <option value="use">--- In Use List ---</option>
            </select>
            <span className={`pointer-events-none absolute top-px right-0.5 bottom-px flex w-3.5 items-center justify-center bg-[#d4d0c8] ${RAISED}`}>
              <Arrow dir="down" />
            </span>
          </div>
        </Band>
        <Band className="ml-2.5 w-[37px]">
          <Tool name="probe" />
        </Band>
        <Band className="ml-[9px] w-[86px]">
          <button aria-label="Simulation switch" className="ml-0.5">
            <svg width="32" height="16" shapeRendering="crispEdges" aria-hidden="true">
              <path d="M.500 .500h31v15h-31z" fill="#d4d0c8" stroke="#000" />
              <path d="M2.500 3.500h15v9h-15z" fill="#fff" stroke="#000" />
              <path d="M17.500 3.500l7-3v10l-7 2z" fill="#fff" stroke="#000" />
              <path d="M24.500 3h5v10h-9l4-3z" fill="#808080" stroke="#000" />
              <path d="M8.500 5.500h3v5h-3zM20.500 5v4" stroke="#000" fill="none" />
            </svg>
          </button>
          <button aria-label="Pause simulation" className="ml-1">
            <svg width="32" height="16" shapeRendering="crispEdges" aria-hidden="true">
              <path d="M.500 .500h30v14h-30zM2.500 4.500h26v8h-26z" fill="none" stroke="#808080" />
              <path d="M1 2.500h29" stroke="#fff" />
              <path d="M13 5h2v7h-2zM17 5h2v7h-2z" fill="#808080" />
            </svg>
          </button>
        </Band>
        <Band className="ml-[9px] w-[244px]">
          <Tool name="run" />
          <Tool name="pause" />
          <Tool name="stop" pressed />
          {['record', 'into', 'over', 'out', 'cursor', 'hand', 'handStop'].map((n) => (
            <Tool key={n} name={n} />
          ))}
        </Band>
      </div>

      <div className="flex min-h-0 grow">
        <DesignToolbox />
        <Workspace />
        <InstrumentBar />
      </div>

      <SpreadsheetView />

      <footer className="flex h-[23px] shrink-0 items-center justify-end gap-0.5 border-t border-[#808080] pb-px shadow-[inset_0_1px_0_#fff]">
        <div className={`h-4 w-[156px] pl-0.5 ${SUNKEN}`}>-</div>
        <div className={`h-4 w-[181px] ${SUNKEN}`} />
        <div className={`h-4 w-[183px] pl-0.5 ${SUNKEN}`}>Tran: 0.040 s</div>
        <div className={`flex h-4 w-[61px] items-center justify-center gap-0.5 ${SUNKEN}`}>
          {[1, 2, 3, 4, 5, 6, 7].map((n) => (
            <span key={n} className={`h-3 w-1.5 ${SUNKEN}`} />
          ))}
        </div>
      </footer>

      <ScopeWindow />
    </div>
  );
}
